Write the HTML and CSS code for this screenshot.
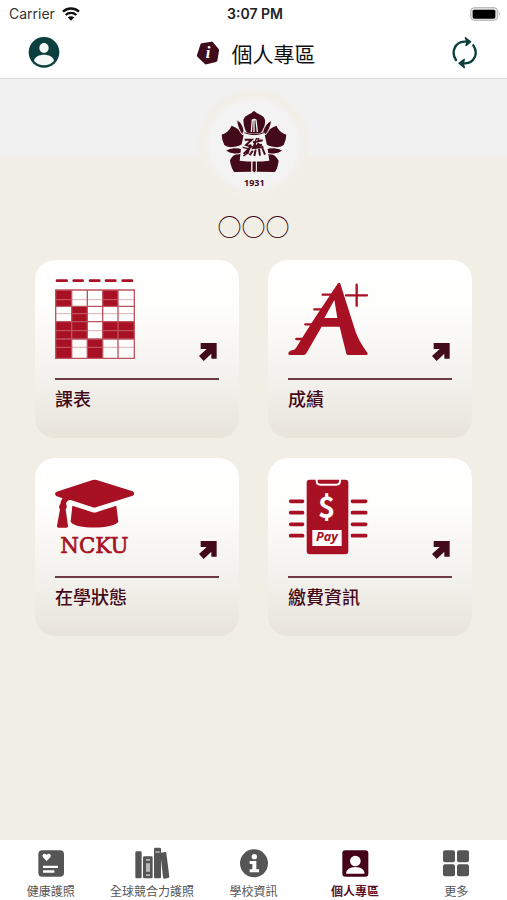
FILE: index.html
```html
<!DOCTYPE html>
<html lang="zh-Hant">
<head>
<meta charset="utf-8">
<meta name="viewport" content="width=device-width, initial-scale=1">
<title>個人專區</title>
<link rel="stylesheet" href="styles.css">
</head>
<body>
<div class="status">
  <div class="status-side">
    <span>Carrier</span>
    <svg class="wifi" width="18" height="14" viewBox="0 0 54 42" aria-hidden="true">
      <path d="M3 14a35 35 0 0 1 48 0M11 24a23 23 0 0 1 32 0" fill="none" stroke="#111" stroke-width="7"/>
      <path d="M27 41 17 31q10-7 20 0z" fill="#111"/>
    </svg>
  </div>
  <span class="clock">3:07 PM</span>
  <div class="status-side status-end">
    <svg width="31" height="14" viewBox="0 0 93 42" aria-hidden="true">
      <rect x="2" y="2" width="81" height="38" rx="11" fill="#e4e4e4" stroke="#b4b4b4" stroke-width="3"/>
      <rect x="8" y="8" width="68" height="27" rx="5" fill="#000"/>
      <path d="M87 15q6 6 0 12z" fill="#b4b4b4"/>
    </svg>
  </div>
</div>
<header class="topbar">
  <button class="icon-button" type="button" aria-label="帳號">
    <svg width="32" height="32" viewBox="0 0 96 96" aria-hidden="true">
      <circle cx="48" cy="46" r="46" fill="#0b3f3f"/>
      <ellipse cx="48" cy="33" rx="14" ry="15" fill="#f6f7f7"/>
      <path d="M18 71c4-24 56-24 60 0-14 18-46 18-60 0z" fill="#f6f7f7"/>
    </svg>
  </button>
  <h1 class="title">
    <svg width="24" height="24" viewBox="0 0 72 72" aria-hidden="true">
      <path d="M17 7 46 2q3-1 5 2l17 20q2 3 1 6l-5 29q-1 3-4 4l-28 7q-4 1-6-2L4 47q-2-2-1-5l10-31q1-3 4-4z" fill="#400b1b"/>
      <text class="badge-letter" x="36" y="52" text-anchor="middle">i</text>
    </svg>
    <span>個人專區</span>
  </h1>
  <button class="icon-button" type="button" aria-label="重新整理">
    <svg width="28" height="32" viewBox="0 0 84 96" aria-hidden="true">
      <g fill="none" stroke="#0b3f3f" stroke-width="7" stroke-linecap="round" stroke-linejoin="round">
        <path d="M15 69C-1 45 12 15 40 14h13M67 25c16 24 3 53-25 54H30"/>
      </g>
      <path d="M43 2 59 14 45 26 48 15zM40 67 24 79l16 13-3-13z" fill="#0b3f3f" stroke="#0b3f3f" stroke-width="4" stroke-linejoin="round"/>
    </svg>
  </button>
</header>

<main class="main">
  <section class="profile">
    <svg class="emblem" width="114" height="114" viewBox="51 21 342 342" role="img" aria-label="1931">
      <defs>
        <radialGradient id="halo">
          <stop offset="0" stop-color="#f3f3f4"/>
          <stop offset=".76" stop-color="#f3f3f3"/>
          <stop offset=".86" stop-color="#f1efe8"/>
          <stop offset=".95" stop-color="#f1efe8"/>
          <stop offset="1" stop-color="#f1efe8" stop-opacity="0"/>
        </radialGradient>
      </defs>
      <circle cx="222" cy="193" r="170" fill="url(#halo)"/>
      <g fill="#430a19">
        <path d="M222 92q9 9 20 13 10 4 13 14 2 20-10 36l-10 12h-26q-18-14-19-48 4-10 13-14 11-4 19-13z"/>
        <path d="M289 137q5 11 13 18 8 6 17 9-1 18-8 31-8 8-26 6-20-2-32-13-5-12 0-22 12-20 36-29z"/>
        <path d="M155 137q-5 11-13 18-8 6-17 9 1 18 8 31 8 8 26 6 20-2 32-13 5-12 0-22-12-20-36-29z"/>
        <path d="M230 275V232l20-14 24 3q17 8 22 22-2 12-5 22l-6 11z"/>
        <path d="M214 275V232l-20-14-24 3q-15 7-20 20 1 13 6 24l6 11z"/>
      </g>
      <g fill="#430a19" stroke="#f3f3f3" stroke-width="3">
        <path d="M170 119q18 9 22 32l-4 14q-16-18-18-46zM275 121q-3 26-19 44l-8-10q8-26 27-34zM136 212q22-15 54-5v10q-28 13-54-5zM309 212q-22-15-54-5v10q28 13 54-5zM216 238h13v36q-6 8-13 0z"/>
      </g>
      <path d="M193 155q-11 42-14 87 44 5 89 0-5-45-16-87-30 12-59 0z" fill="#f3f3f3"/>
      <path d="M193 158q30 12 59 0" fill="none" stroke="#430a19" stroke-width="3"/>
      <path d="M214 156l3-36q6-4 11 0l4 36M222 119v37" fill="none" stroke="#f3f3f3" stroke-width="4"/>
      <path d="M194 179h21l-17 16 15 5-22 22M212 193l-10 29M219 187l29-6M224 198l22-4M235 174v31M228 184l-9 20 31-3M218 212l-9 14M227 209l-4 19M237 207l3 20M247 204l8 20" fill="none" stroke="#430a19" stroke-width="6"/>
      <path d="m188 202 16 4M190 228l15-10M230 174l-5 13" stroke="#430a19" stroke-width="4"/>
      <text class="year" x="223" y="317" text-anchor="middle">1931</text>
    </svg>
    <p class="name">○○○</p>
  </section>

  <section class="cards">
    <a class="card" href="#schedule">
      <span class="card-art">
        <svg width="80" height="83" viewBox="75 69 240 249" aria-hidden="true">
          <path d="M81 77h29M131 77h27M180 77h28M228 77h28M278 77h28" stroke="#a81123" stroke-width="8" stroke-linecap="round"/>
          <path d="M77 105h236v205H77z" fill="#fff" fill-opacity=".6"/>
          <path d="M77 105h48v49H77zM218 105h46v49h-46zM125 154h47v46h-47zM77 200h95v52H77zM218 200h95v52h-95zM77 252h48v58H77zM172 252h46v58h-46z" fill="#a81123"/>
          <path d="M77 134h236M77 176h236M77 227h236M77 277h236" stroke="#d08a91" stroke-width="2"/>
          <path d="M77 105h236v205H77zM77 154h236M77 200h236M77 252h236M125 105v205M172 105v205M218 105v205M264 105v205" fill="none" stroke="#bd5360" stroke-width="4"/>
        </svg>
        <svg class="arrow" width="18" height="18" viewBox="0 0 54 54" aria-hidden="true"><path d="M5 0h48v47H37V32L14 54 0 39 23 18H5z"/></svg>
      </span>
      <span class="card-label">課表</span>
    </a>
    <a class="card" href="#grades">
      <span class="card-art">
        <svg width="80" height="83" viewBox="78 69 240 249" aria-hidden="true">
          <path fill-rule="evenodd" fill="#a81123" d="M227 86q5-6 8 0l41 129q10 38 40 78 3 7-3 7h-54q-5 0-6-4l-20-81h-54l-46 80q-3 5-8 5H81q-5-8 3-12 6-3 10-3 5-1 8-6l30-49 29-45zM217 135l-30 54h39z"/>
          <path d="M182 119h36M157 163h28M130 208h30M103 252h30M252 121h63M284 89v63" stroke="#a81123" stroke-width="7" stroke-linecap="round"/>
        </svg>
        <svg class="arrow" width="18" height="18" viewBox="0 0 54 54" aria-hidden="true"><path d="M5 0h48v47H37V32L14 54 0 39 23 18H5z"/></svg>
      </span>
      <span class="card-label">成績</span>
    </a>
    <a class="card" href="#enrollment">
      <span class="card-art">
        <svg width="80" height="83" viewBox="75 72 240 249" aria-hidden="true">
          <path d="M188 84q6-2 12 0l108 34q10 7 0 13l-108 34q-7 3-14 0L122 144q-11-1-14 11 5 10-1 17l7 50q0 5-5 5H85q-5 0-4-6l9-49q-6-7 1-16 1-10 7-17l-18-6q-10-8 0-14z" fill="#a81123"/>
          <path d="m127 161 58 19q8 3 16 0l58-19 6 48c-12 22-129 25-143 0z" fill="#a81123"/>
          <text class="ncku" x="193" y="304" text-anchor="middle">NCKU</text>
        </svg>
        <svg class="arrow" width="18" height="18" viewBox="0 0 54 54" aria-hidden="true"><path d="M5 0h48v47H37V32L14 54 0 39 23 18H5z"/></svg>
      </span>
      <span class="card-label">在學狀態</span>
    </a>
    <a class="card" href="#payment">
      <span class="card-art">
        <svg width="80" height="83" viewBox="78 72 240 249" aria-hidden="true">
          <path d="M86 148h36M86 182h36M86 217h36M86 251h36M271 148h40M271 182h40M271 217h40M271 251h40" stroke="#a81123" stroke-width="11" stroke-linecap="round"/>
          <rect x="128" y="80" width="137" height="229" fill="#fdfdfc"/>
          <rect x="134" y="83" width="125" height="224" rx="9" fill="#a81123"/>
          <path d="M164 80v7q0 11 11 11h48q11 0 11-11v-7" fill="none" stroke="#fff" stroke-width="6"/>
          <rect x="151" y="234" width="88" height="48" fill="#fff"/>
          <text class="dollar" x="194" y="197" text-anchor="middle">$</text>
          <text class="pay" x="195" y="268" text-anchor="middle">Pay</text>
        </svg>
        <svg class="arrow" width="18" height="18" viewBox="0 0 54 54" aria-hidden="true"><path d="M5 0h48v47H37V32L14 54 0 39 23 18H5z"/></svg>
      </span>
      <span class="card-label">繳費資訊</span>
    </a>
  </section>
</main>

<nav class="tabs">
  <a class="tab" href="#health">
    <svg width="36" height="32" viewBox="0 0 108 96" aria-hidden="true">
      <rect x="16" y="10" width="77" height="79" rx="12" fill="#555"/>
      <path d="M41 42 30 31q-4-6 1-10 6-3 10 3 4-6 10-3 5 4 1 10zM30 56h45v7H30zM30 70h34v7H30z" fill="#fff"/>
    </svg>
    <span>健康護照</span>
  </a>
  <a class="tab" href="#global">
    <svg width="36" height="32" viewBox="0 0 108 96" aria-hidden="true">
      <g fill="#555">
        <rect x="4" y="13" width="19" height="81" rx="4"/>
        <rect x="27" y="28" width="29" height="66" rx="4"/>
        <rect x="60" y="2" width="21" height="92" rx="4"/>
        <path d="m79 18 14-3q3-1 4 3l9 71q0 3-3 4l-12 2q-3 0-4-4z"/>
      </g>
      <path d="M36 36h12v5H36zM36 49h12v25H36zM36 82h12v5H36zM64 13h13v4H64z" fill="#bbb"/>
    </svg>
    <span>全球競合力護照</span>
  </a>
  <a class="tab" href="#school">
    <svg width="36" height="32" viewBox="0 0 108 96" aria-hidden="true">
      <circle cx="54" cy="49" r="42" fill="#555"/>
      <circle cx="55" cy="29" r="8" fill="#fff"/>
      <path d="M41 42h20v25h8v9H41v-9h8V51h-8z" fill="#fff"/>
    </svg>
    <span>學校資訊</span>
  </a>
  <a class="tab active" href="#personal" aria-current="page">
    <svg width="36" height="32" viewBox="0 0 108 96" aria-hidden="true">
      <rect x="16" y="10" width="78" height="79" rx="9" fill="#45031a"/>
      <circle cx="55" cy="42" r="16" fill="#fff"/>
      <path d="M27 80q2-20 28-20t28 20z" fill="#fff"/>
    </svg>
    <span>個人專區</span>
  </a>
  <a class="tab" href="#more">
    <svg width="36" height="32" viewBox="0 0 108 96" aria-hidden="true">
      <g fill="#555">
        <rect x="15" y="10" width="36" height="36" rx="6"/><rect x="57" y="10" width="36" height="36" rx="6"/>
        <rect x="15" y="52" width="36" height="36" rx="6"/><rect x="57" y="52" width="36" height="36" rx="6"/>
      </g>
    </svg>
    <span>更多</span>
  </a>
</nav>
</body>
</html>
```
FILE: styles.css
```css
* {
  box-sizing: border-box;
}

body {
  margin: 0;
  min-height: 100vh;
  display: flex;
  flex-direction: column;
  background: #fff;
  color: #111;
  font-family: "Noto Sans CJK TC", sans-serif;
}

a {
  color: inherit;
  text-decoration: none;
}

svg {
  display: block;
  flex: none;
}

.status {
  display: flex;
  align-items: center;
  height: 28px;
  padding: 0 6px 0 9px;
  font: 14px/20px Inter, sans-serif;
  color: #333;
}

.status-side {
  flex: 1;
  display: flex;
  align-items: center;
  gap: 7px;
}

.status-end {
  justify-content: flex-end;
}

.clock {
  font-weight: 600;
  color: #222;
}

.topbar {
  display: flex;
  align-items: center;
  justify-content: space-between;
  height: 51px;
  padding: 0 28px;
  border-bottom: 1px solid #dcdcdc;
}

.icon-button {
  padding: 0;
  border: 0;
  background: none;
}

.title {
  display: flex;
  align-items: center;
  gap: 12px;
  margin: 0;
  font-size: 21px;
  line-height: 30px;
  font-weight: 400;
}

.badge-letter {
  font: italic bold 50px "Liberation Serif", serif;
  fill: #fff;
}

.main {
  flex: 1;
  background: linear-gradient(#f1f1f2 77px, #f1eee6 78px);
}

.profile {
  display: flex;
  flex-direction: column;
  align-items: center;
  padding-top: 8px;
}

.year {
  font: bold 27px "Noto Sans", sans-serif;
  fill: #430a19;
}

.name {
  margin: 9px 0 0;
  font-size: 24px;
  line-height: 32px;
  color: #430a19;
}

.cards {
  display: grid;
  grid-template-columns: 1fr 1fr;
  gap: 20px 29px;
  padding: 18px 35px 24px;
}

.card {
  display: flex;
  flex-direction: column;
  gap: 17px;
  padding: 18px 20px 28px;
  border-radius: 20px;
  background: linear-gradient(#fff 0%, #fefefd 25%, #f2f0eb 70%, #e8e4da 100%);
}

.card-art {
  display: flex;
  justify-content: space-between;
  align-items: flex-end;
}

.arrow {
  margin-right: 2px;
  fill: #430a19;
}

.card-label {
  padding-top: 6px;
  border-top: 2px solid #6b3a44;
  font-size: 18px;
  line-height: 24px;
  font-weight: 500;
  color: #430a19;
}

.ncku {
  font: 64px "DejaVu Serif", serif;
  fill: #a81123;
  stroke: #a81123;
  stroke-width: 2px;
}

.dollar {
  font: bold 88px "Noto Sans CJK TC", sans-serif;
  fill: #fff;
}

.pay {
  font: italic bold 38px "Open Sans", sans-serif;
  fill: #a81123;
}

.tabs {
  display: flex;
  height: 60px;
  padding-top: 7px;
  background: #fff;
}

.tab {
  flex: 1;
  display: flex;
  flex-direction: column;
  align-items: center;
  gap: 4px;
  font-size: 12px;
  line-height: 16px;
  white-space: nowrap;
  color: #555;
}

.active {
  font-weight: 700;
  color: #5c1028;
}
```
